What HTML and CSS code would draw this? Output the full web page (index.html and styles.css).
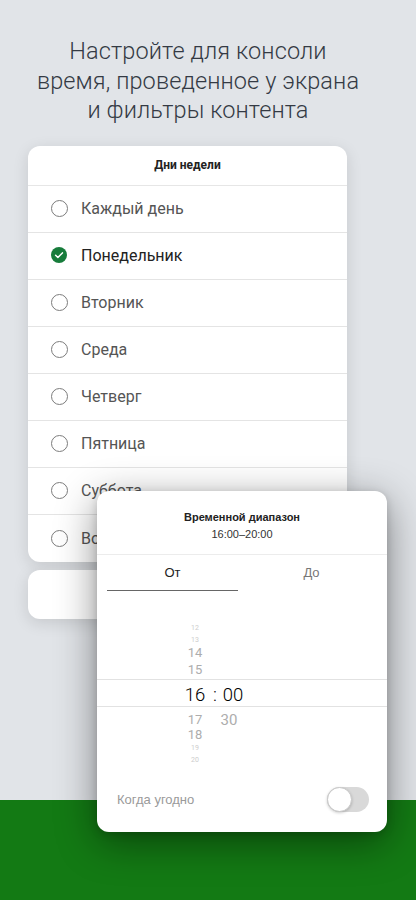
FILE: index.html
```html
<!DOCTYPE html>
<html lang="ru">
<head>
  <meta charset="UTF-8" />
  <meta name="viewport" content="width=device-width, initial-scale=1.0" />
  <title>Экранное время</title>
  <link rel="stylesheet" href="styles.css">
</head>
<body>
  <div class="screen">
    <h1 class="hero">Настройте для консоли<br>время, проведенное у экрана<br>и фильтры контента</h1>

    <div class="card days">
      <div class="card-head">Дни недели</div>
      <div class="row"><span class="radio"></span>Каждый день</div>
      <div class="row"><span class="radio on"><svg viewBox="0 0 16 16" width="16" height="16"><circle cx="8" cy="8" r="8" fill="#177c3b"/><path d="M4.6 8.2l2.3 2.3 4.5-4.6" fill="none" stroke="#fff" stroke-width="1.5" stroke-linecap="round" stroke-linejoin="round"/></svg></span><span class="dark">Понедельник</span></div>
      <div class="row"><span class="radio"></span>Вторник</div>
      <div class="row"><span class="radio"></span>Среда</div>
      <div class="row"><span class="radio"></span>Четверг</div>
      <div class="row"><span class="radio"></span>Пятница</div>
      <div class="row"><span class="radio"></span>Суббота</div>
      <div class="row"><span class="radio"></span>Воскресенье</div>
    </div>
    <div class="card btn-card"></div>

    <div class="band"></div>

    <div class="sheet">
      <div class="sheet-head">
        <div class="sheet-title">Временной диапазон</div>
        <div class="sheet-sub">16:00–20:00</div>
      </div>
      <div class="tabs">
        <div class="tab active">От</div>
        <div class="tab">До</div>
      </div>
      <div class="picker">
        <div class="wheel-up col-h">
          <span class="n-xs">12</span>
          <span class="n-xs">13</span>
          <span class="n-sm n14">14</span>
          <span class="n-sm n15">15</span>
        </div>
        <div class="wheel-sel">
          <span class="col-h">16</span><span class="colon">:</span><span class="col-m">00</span>
        </div>
        <div class="wheel-down">
          <div class="col-h">
            <span class="n-sm n17">17</span>
            <span class="n-sm n18">18</span>
            <span class="n-xs n19">19</span>
            <span class="n-xs n20">20</span>
          </div>
          <div class="col-m"><span class="n-sm n17 m30">30</span></div>
        </div>
      </div>
      <div class="toggle-row">
        <span>Когда угодно</span>
        <span class="toggle"><span class="knob"></span></span>
      </div>
    </div>
  </div>
</body>
</html>
```

FILE: styles.css
```css
* { box-sizing: border-box; margin: 0; padding: 0; }
body {
  background: #e1e4e8;
  font-family: Roboto, "Liberation Sans", sans-serif;
  overflow: hidden;
}
.screen {
  position: relative;
  width: 416px; height: 900px;
  display: flex; flex-direction: column;
}
.hero {
  padding: 37px 20px 0 0;
  font-size: 23.5px; font-weight: 300; line-height: 29.5px;
  text-align: center; color: #343a44;
  letter-spacing: 0.1px;
}
.card {
  margin: 0 69px 0 28px;
  background: #fff; border-radius: 12px;
  box-shadow: 0 4px 16px rgba(0, 0, 0, 0.12);
}
.days { margin-top: 20px; overflow: hidden; }
.card-head {
  height: 40px; display: flex; align-items: center; justify-content: center;
  font-size: 12px; font-weight: 700; color: #222;
  border-bottom: 1px solid #e6e6e6;
}
.row {
  height: 47px; display: flex; align-items: center;
  padding-left: 23px;
  font-size: 16px; color: #555;
  border-bottom: 1px solid #e4e4e4;
}
.row:first-of-type { height: 44px; }
.row:last-child { border-bottom: none; }
.radio {
  width: 17px; height: 17px; margin-right: 13px;
  border: 1px solid #7c7c7c; border-radius: 50%;
  flex-shrink: 0;
}
.radio.on { border: none; }
.radio svg { display: block; }
.dark { color: #222; }
.btn-card { margin-top: 8px; height: 49px; }
.band { margin-top: auto; height: 100px; background: #137a14; }

.sheet {
  position: absolute; left: 97px; top: 491px;
  width: 290px; height: 341px;
  background: #fff; border-radius: 12px;
  box-shadow: 0 10px 40px rgba(0, 0, 0, 0.45), 0 2px 8px rgba(0, 0, 0, 0.15);
  font-family: "Liberation Sans", Inter, sans-serif;
  display: flex; flex-direction: column;
}
.sheet-head {
  height: 64px; padding-top: 20px; text-align: center;
  border-bottom: 1px solid #ececec;
}
.sheet-title { font-size: 11px; font-weight: 700; color: #222; }
.sheet-sub { margin-top: 5px; font-size: 11px; color: #333; }
.tabs { display: flex; padding: 0 10px; }
.tab {
  flex: 1; height: 36px; padding-top: 10px;
  text-align: center; font-size: 13px; color: #777;
}
.tab.active { color: #222; border-bottom: 1px solid #666; }
.tab + .tab { padding-left: 8px; }
.picker { padding-top: 31px; font-family: Roboto, sans-serif; }
.col-h { margin-left: 86px; width: 24px; text-align: center; }
.col-m { width: 24px; text-align: center; }
.wheel-up, .wheel-down .col-h { display: flex; flex-direction: column; align-items: center; }
.n-xs { font-size: 7px; line-height: 12px; color: #cdcdcd; }
.n-sm { font-size: 13px; color: #adadad; }
.n14 { line-height: 14px; }
.n15 { line-height: 19px; }
.wheel-sel {
  height: 28px; display: flex; align-items: center; padding-top: 4px;
  border-top: 1px solid #e2e2e2; border-bottom: 1px solid #e2e2e2;
  font-size: 18.5px; font-weight: 300; color: #000;
}
.wheel-sel .col-h { margin-left: 84px; width: 28px; }
.colon { width: 12px; text-align: center; }
.wheel-sel .col-m { width: 24px; }
.wheel-down { display: flex; }
.wheel-down .col-h { padding-top: 6px; }
.wheel-down .col-m { margin-left: 10px; padding-top: 6px; }
.n17 { line-height: 14px; display: block; }
.n18 { line-height: 15px; }
.n19 { line-height: 13px; }
.n20 { line-height: 10px; }
.m30 { font-size: 15px; }
.toggle-row {
  margin-top: auto; height: 56px;
  display: flex; align-items: center; justify-content: space-between;
  padding: 0 18px 10px 20px;
  font-size: 13px; color: #9a9a9a;
}
.toggle {
  position: relative; width: 42px; height: 25px;
  border-radius: 13px; background: #d9d9d9;
}
.knob {
  position: absolute; left: 0; top: 0;
  width: 25px; height: 25px; border-radius: 50%;
  background: #fff; border: 1px solid #c8c8c8;
  box-shadow: 0 1px 3px rgba(0, 0, 0, 0.2);
}
```
